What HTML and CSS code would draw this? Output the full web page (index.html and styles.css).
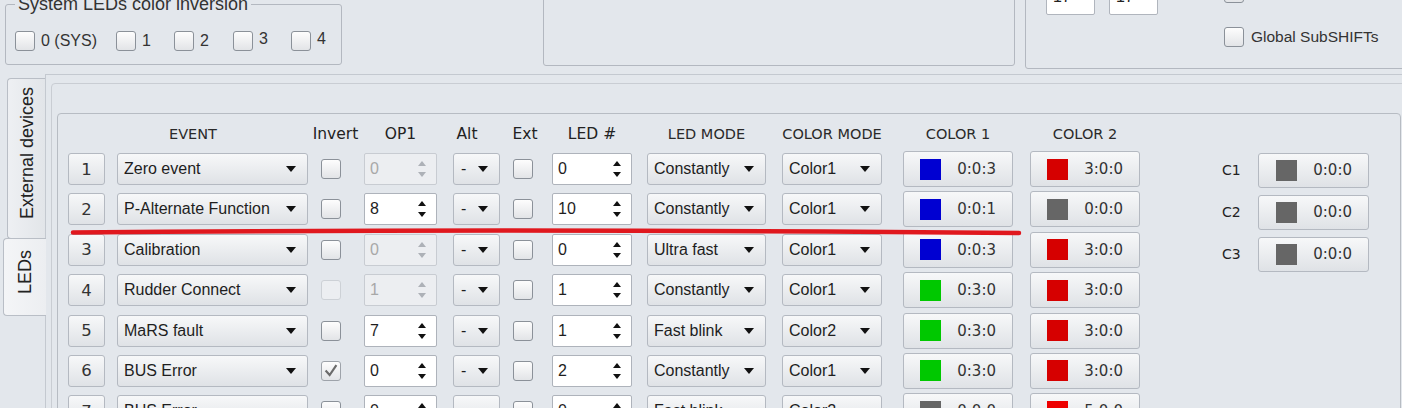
FILE: index.html
```html
<!DOCTYPE html>
<html>
<head>
<meta charset="utf-8">
<title>LEDs</title>
<link rel="stylesheet" href="styles.css">
</head>
<body>
<div class="top">
  <fieldset class="gb1">
    <legend>System LEDs color inversion</legend>
    <div class="cbrow">
      <label class="ci i1"><span class="cb"></span>0 (SYS)</label>
      <label class="ci i2"><span class="cb"></span>1</label>
      <label class="ci i3"><span class="cb"></span>2</label>
      <label class="ci i4"><span class="cb"></span><span class="up">3</span></label>
      <label class="ci"><span class="cb"></span><span class="up">4</span></label>
    </div>
  </fieldset>
  <div class="box2"></div>
  <div class="box3">
    <div class="sp">17</div>
    <div class="sp sp2">17</div>
    <div class="col">
      <span class="cb"></span>
      <label class="ci gl"><span class="cb"></span>Global SubSHIFTs</label>
    </div>
  </div>
</div>
<div class="main">
  <div class="tabs">
    <div class="tab t1"><span>External devices</span></div>
    <div class="tab t2"><span>LEDs</span></div>
  </div>
  <div class="pane">
    <div class="frame">
      <div class="group">
        <div class="left">
          <div class="thead">
            <div></div>
            <div class="hs h-ev">EVENT</div>
            <div class="hl h-cb h-inv">Invert</div>
            <div class="hl h-op">OP1</div>
            <div class="hl h-alt">Alt</div>
            <div class="hl h-cb h-ext">Ext</div>
            <div class="hl h-led">LED #</div>
            <div class="hs h-mode">LED MODE</div>
            <div class="hs h-cm">COLOR MODE</div>
            <div class="hs h-c">COLOR 1</div>
            <div class="hs h-c">COLOR 2</div>
          </div>
          <div class="tbl">
            <div class="nb">1</div>
            <div class="combo w-ev"><span>Zero event</span></div>
            <span class="cb"></span>
            <div class="spin w-op dis"><span>0</span><i class="arr"></i></div>
            <div class="combo w-alt"><span>-</span></div>
            <span class="cb"></span>
            <div class="spin w-led"><span>0</span><i class="arr"></i></div>
            <div class="combo w-mode"><span>Constantly</span></div>
            <div class="combo w-cm"><span>Color1</span></div>
            <div class="cbtn"><i class="sw blue"></i><span>0:0:3</span></div>
            <div class="cbtn"><i class="sw red"></i><span>3:0:0</span></div>

            <div class="nb">2</div>
            <div class="combo w-ev"><span>P-Alternate Function</span></div>
            <span class="cb"></span>
            <div class="spin w-op"><span>8</span><i class="arr"></i></div>
            <div class="combo w-alt"><span>-</span></div>
            <span class="cb"></span>
            <div class="spin w-led"><span>10</span><i class="arr"></i></div>
            <div class="combo w-mode"><span>Constantly</span></div>
            <div class="combo w-cm"><span>Color1</span></div>
            <div class="cbtn"><i class="sw blue"></i><span>0:0:1</span></div>
            <div class="cbtn"><i class="sw gray"></i><span>0:0:0</span></div>

            <div class="nb">3</div>
            <div class="combo w-ev"><span>Calibration</span></div>
            <span class="cb"></span>
            <div class="spin w-op dis"><span>0</span><i class="arr"></i></div>
            <div class="combo w-alt"><span>-</span></div>
            <span class="cb"></span>
            <div class="spin w-led"><span>0</span><i class="arr"></i></div>
            <div class="combo w-mode"><span>Ultra fast</span></div>
            <div class="combo w-cm"><span>Color1</span></div>
            <div class="cbtn"><i class="sw blue"></i><span>0:0:3</span></div>
            <div class="cbtn"><i class="sw red"></i><span>3:0:0</span></div>

            <div class="nb">4</div>
            <div class="combo w-ev"><span>Rudder Connect</span></div>
            <span class="cb dis"></span>
            <div class="spin w-op dis"><span>1</span><i class="arr"></i></div>
            <div class="combo w-alt"><span>-</span></div>
            <span class="cb"></span>
            <div class="spin w-led"><span>1</span><i class="arr"></i></div>
            <div class="combo w-mode"><span>Constantly</span></div>
            <div class="combo w-cm"><span>Color1</span></div>
            <div class="cbtn"><i class="sw green"></i><span>0:3:0</span></div>
            <div class="cbtn"><i class="sw red"></i><span>3:0:0</span></div>

            <div class="nb">5</div>
            <div class="combo w-ev"><span>MaRS fault</span></div>
            <span class="cb"></span>
            <div class="spin w-op"><span>7</span><i class="arr"></i></div>
            <div class="combo w-alt"><span>-</span></div>
            <span class="cb"></span>
            <div class="spin w-led"><span>1</span><i class="arr"></i></div>
            <div class="combo w-mode"><span>Fast blink</span></div>
            <div class="combo w-cm"><span>Color2</span></div>
            <div class="cbtn"><i class="sw green"></i><span>0:3:0</span></div>
            <div class="cbtn"><i class="sw red"></i><span>3:0:0</span></div>

            <div class="nb">6</div>
            <div class="combo w-ev"><span>BUS Error</span></div>
            <span class="cb on"><svg viewBox="0 0 20 20" width="18" height="18"><polyline points="4,9.5 8.5,14.5 16,3.5" fill="none" stroke="#6b6b6b" stroke-width="2.4"/></svg></span>
            <div class="spin w-op"><span>0</span><i class="arr"></i></div>
            <div class="combo w-alt"><span>-</span></div>
            <span class="cb"></span>
            <div class="spin w-led"><span>2</span><i class="arr"></i></div>
            <div class="combo w-mode"><span>Constantly</span></div>
            <div class="combo w-cm"><span>Color1</span></div>
            <div class="cbtn"><i class="sw green"></i><span>0:3:0</span></div>
            <div class="cbtn"><i class="sw red"></i><span>3:0:0</span></div>

            <div class="nb">7</div>
            <div class="combo w-ev"><span>BUS Error</span></div>
            <span class="cb"></span>
            <div class="spin w-op"><span>0</span><i class="arr"></i></div>
            <div class="combo w-alt"><span>-</span></div>
            <span class="cb"></span>
            <div class="spin w-led"><span>0</span><i class="arr"></i></div>
            <div class="combo w-mode"><span>Fast blink</span></div>
            <div class="combo w-cm"><span>Color2</span></div>
            <div class="cbtn"><i class="sw gray"></i><span>0:0:0</span></div>
            <div class="cbtn"><i class="sw red2"></i><span>5:0:0</span></div>
          </div>
        </div>
        <div class="ccol">
          <div class="crow"><span class="clab">C1</span><div class="cbtn cb2"><i class="sw gray"></i><span>0:0:0</span></div></div>
          <div class="crow"><span class="clab">C2</span><div class="cbtn cb2"><i class="sw gray"></i><span>0:0:0</span></div></div>
          <div class="crow"><span class="clab">C3</span><div class="cbtn cb2"><i class="sw gray"></i><span>0:0:0</span></div></div>
        </div>
      </div>
    </div>
  </div>
</div>
<svg class="mark" width="1402" height="408" viewBox="0 0 1402 408">
  <path d="M73 232.5 Q 520 228.5 1019 233" fill="none" stroke="#e0181e" stroke-width="4.5" stroke-linecap="round"/>
</svg>
</body>
</html>
```
FILE: styles.css
```css
* { box-sizing: border-box; }
html, body { margin: 0; padding: 0; }
body {
  width: 1402px;
  height: 408px;
  overflow: hidden;
  position: relative;
  background: #e3e7ec;
  font-family: "Liberation Sans", Arial, sans-serif;
  color: #222;
}

/* ---------- top strip ---------- */
.top {
  display: flex;
  align-items: flex-start;
  height: 74px;
}
.top > * { flex: none; }
.gb1 {
  margin: -6px 0 0 5px;
  padding: 17px 0 13px 9px;
  width: 337px;
  min-width: 0;
  border: 1px solid #b3b8c0;
  border-radius: 3px;
}
.gb1 legend {
  font-size: 18px;
  line-height: 20px;
  padding: 0 3px;
  margin-left: 0;
  color: #333;
}
.cbrow {
  display: flex;
  align-items: center;
  height: 20px;
}
.ci {
  display: flex;
  align-items: center;
  gap: 6px;
  font-size: 16px;
  color: #333;
  white-space: nowrap;
}
.i1 { width: 101px; }
.i2 { width: 58px; }
.i3 { width: 59px; }
.i4 { width: 58px; }
.up { position: relative; top: -2px; }

.cb {
  flex: none;
  width: 20px;
  height: 20px;
  border: 1px solid #8b9199;
  border-radius: 3px;
  background: linear-gradient(#fdfdfd, #e2e4e7);
  display: flex;
  align-items: center;
  justify-content: center;
}
.cb.dis {
  border-color: #cdd1d6;
  background: #eceef1;
}
.cb.on {
  border-color: #9ea3aa;
}

.box2 {
  margin: -10px 0 0 201px;
  width: 472px;
  height: 76px;
  border: 1px solid #b3b8c0;
  border-radius: 3px;
}
.box3 {
  margin: -30px 0 0 10px;
  width: 420px;
  height: 99px;
  border: 1px solid #b3b8c0;
  border-radius: 3px;
  padding: 12px 0 0 20px;
  display: flex;
  align-items: flex-start;
}
.sp {
  flex: none;
  width: 49px;
  height: 32px;
  background: #fff;
  border: 1px solid #b0b5bd;
  border-radius: 2px;
  font-size: 16px;
  line-height: 26px;
  padding-left: 6px;
  color: #222;
}
.sp2 { margin-left: 14px; }
.col {
  margin-left: 66px;
  display: flex;
  flex-direction: column;
  gap: 24px;
}
.gl { gap: 7px; font-size: 15.5px; }

/* ---------- tabs ---------- */
.main {
  display: flex;
  height: 334px;
}
.tabs {
  width: 45px;
  flex: none;
  padding-top: 4px;
  display: flex;
  flex-direction: column;
  align-items: flex-end;
}
.tab {
  border: 1px solid #b9bec6;
  border-right: 0;
  border-radius: 4px 0 0 4px;
  display: flex;
  align-items: center;
  justify-content: center;
  font-size: 18px;
  color: #222;
}
.tab span {
  writing-mode: vertical-rl;
  transform: rotate(180deg);
  white-space: nowrap;
}
.t1 {
  width: 38px;
  height: 161px;
  background: linear-gradient(90deg, #eef0f3, #e2e5e9);
}
.t1 span { margin-bottom: 10px; margin-left: 2px; }
.t2 {
  width: 43px;
  height: 78px;
  margin-top: -1px;
  margin-right: -1px;
  position: relative;
  z-index: 1;
  background: linear-gradient(90deg, #f4f5f7, #eceef1);
}
.t2 span { margin-bottom: 10px; }

.pane {
  flex: 1;
  border-top: 1px solid #c4c9d0;
  border-left: 1px solid #c4c9d0;
  padding: 8px 0 0 5px;
  overflow: hidden;
}
.frame {
  width: 1360px;
  height: 400px;
  border: 1px solid #c9cdd3;
  border-radius: 4px;
  padding: 29px 0 0 5px;
}
.group {
  width: 1344px;
  height: 400px;
  border: 1px solid #b7bcc3;
  border-radius: 4px;
  padding-left: 10px;
  display: flex;
  align-items: flex-start;
}
.left { flex: none; }

/* ---------- table ---------- */
.thead, .tbl {
  display: grid;
  grid-template-columns: 49px 204px 43px 89px 60px 39px 95px 135px 121px 127px 110px;
  justify-items: start;
  align-items: center;
}
.thead { height: 39px; }
.tbl {
  grid-auto-rows: 32px;
  row-gap: 8.4px;
}
.hs, .hl {
  font-family: "DejaVu Sans", sans-serif;
  color: #222;
  white-space: nowrap;
  text-align: center;
}
.hs { font-size: 14.5px; color: #2a2a2a; }
.hl { font-size: 15.5px; }
.h-cb {
  width: 20px;
  display: flex;
  justify-content: center;
}
.h-inv { padding-left: 9px; }
.h-ext { padding-left: 4px; }
.h-ev { width: 191px; padding-right: 39px; }
.h-op { width: 73px; }
.h-alt { width: 47px; padding-right: 19px; }
.h-led { width: 80px; }
.h-mode { width: 119px; }
.h-cm { width: 100px; }
.h-c { width: 110px; }

.nb, .combo, .cbtn {
  border: 1px solid #b4b9c1;
  border-radius: 3px;
  background: linear-gradient(#f7f8f9, #dfe2e6);
}
.nb {
  width: 37px;
  height: 32px;
  display: flex;
  align-items: center;
  justify-content: center;
  font-family: "DejaVu Sans", sans-serif;
  font-size: 16.5px;
  color: #333;
}
.combo {
  height: 32px;
  display: flex;
  align-items: center;
  justify-content: space-between;
  padding: 0 11px 0 6px;
  font-size: 16px;
  color: #1e1e1e;
  white-space: nowrap;
}
.combo::after {
  content: "";
  flex: none;
  border-left: 5px solid transparent;
  border-right: 5px solid transparent;
  border-top: 6px solid #111;
}
.w-ev { width: 191px; }
.w-alt { width: 47px; padding-left: 7px; }
.w-mode { width: 119px; }
.w-cm { width: 100px; }

.spin {
  height: 32px;
  background: #fff;
  border: 1px solid #aeb3bb;
  border-radius: 2px;
  display: flex;
  align-items: center;
  justify-content: space-between;
  padding: 0 10px 0 5px;
  font-size: 16px;
  color: #1e1e1e;
}
.w-op { width: 73px; }
.w-led { width: 80px; }
.arr {
  display: flex;
  flex-direction: column;
  gap: 6px;
}
.arr::before, .arr::after {
  content: "";
  border-left: 4.5px solid transparent;
  border-right: 4.5px solid transparent;
}
.arr::before { border-bottom: 5px solid #111; }
.arr::after { border-top: 5px solid #111; }
.spin.dis {
  background: #eceef1;
  border-color: #c8ccd2;
  color: #a8a8a8;
}
.spin.dis .arr::before { border-bottom-color: #adb1b7; }
.spin.dis .arr::after { border-top-color: #adb1b7; }

.cbtn {
  width: 110px;
  height: 36px;
  margin: -2px 0;
  display: flex;
  align-items: center;
  justify-content: space-between;
  padding: 0 16px;
  font-family: "DejaVu Sans", sans-serif;
  font-size: 15px;
  color: #333;
}
.sw {
  width: 21px;
  height: 21px;
  flex: none;
}
.blue { background: #0000d2; }
.red { background: #d60000; }
.red2 { background: #ee0000; }
.green { background: #00c800; }
.gray { background: #666666; }

/* ---------- C1..C3 ---------- */
.ccol {
  flex: none;
  margin-left: 82px;
  padding-top: 38.5px;
  display: flex;
  flex-direction: column;
  gap: 7px;
}
.crow {
  display: flex;
  align-items: center;
}
.clab {
  width: 36px;
  font-family: "DejaVu Sans", sans-serif;
  font-size: 14px;
  color: #222;
}
.cb2 {
  width: 111px;
  height: 35px;
  margin: 0;
  padding: 0 16px 0 17px;
}

/* annotation overlay */
.mark {
  position: absolute;
  left: 0;
  top: 0;
  pointer-events: none;
}
```
